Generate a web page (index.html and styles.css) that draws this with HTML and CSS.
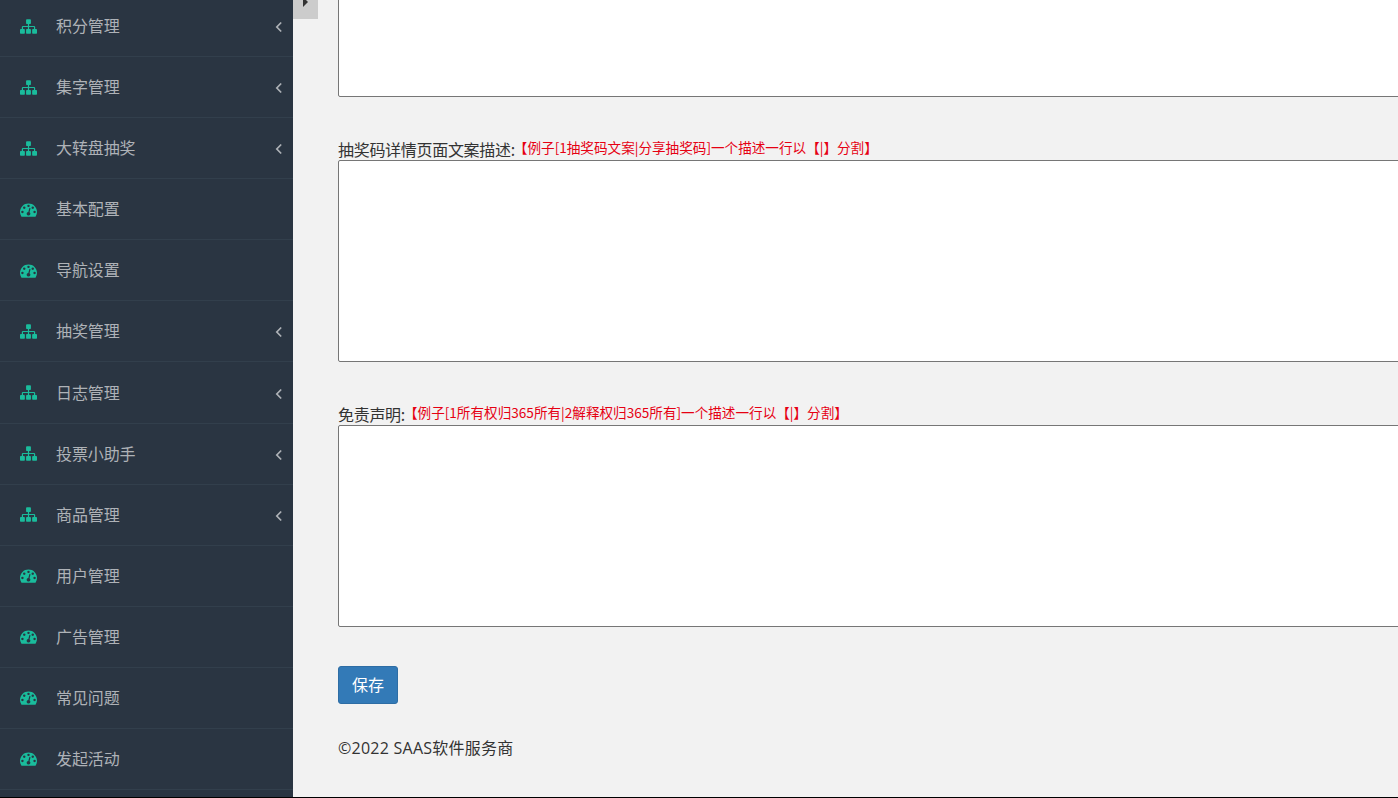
FILE: index.html
```html
<!DOCTYPE html>
<html lang="zh-CN">
<head>
<meta charset="utf-8">
<title>SAAS</title>
<link rel="stylesheet" href="styles.css">
</head>
<body>
<svg class="defs" aria-hidden="true">
<symbol id="i-sitemap" viewBox="0 0 1792 1792"><path d="M1792 1248v320q0 40-28 68t-68 28h-320q-40 0-68-28t-28-68v-320q0-40 28-68t68-28h96v-192h-512v192h96q40 0 68 28t28 68v320q0 40-28 68t-68 28h-320q-40 0-68-28t-28-68v-320q0-40 28-68t68-28h96v-192h-512v192h96q40 0 68 28t28 68v320q0 40-28 68t-68 28h-320q-40 0-68-28t-28-68v-320q0-40 28-68t68-28h96v-192q0-52 38-90t90-38h512v-192h-96q-40 0-68-28t-28-68v-320q0-40 28-68t68-28h320q40 0 68 28t28 68v320q0 40-28 68t-68 28h-96v192h512q52 0 90 38t38 90v192h96q40 0 68 28t28 68z"/></symbol>
<symbol id="i-dash" viewBox="0 0 1792 1792"><path fill-rule="evenodd" d="M384 1152q0-53-37.5-90.5t-90.5-37.5-90.5 37.5-37.5 90.5 37.5 90.5 90.5 37.5 90.5-37.5 37.5-90.5zm192-448q0-53-37.5-90.5t-90.5-37.5-90.5 37.5-37.5 90.5 37.5 90.5 90.5 37.5 90.5-37.5 37.5-90.5zm428 481l101-382q6-26-7.5-48.5t-38.5-29.5-48 6.5-30 39.5l-101 382q-60 5-107 43.5t-63 98.5q-20 77 20 146t117 89 146-20 89-117q16-60-6-117t-72-91zm660-33q0-53-37.5-90.5t-90.5-37.5-90.5 37.5-37.5 90.5 37.5 90.5 90.5 37.5 90.5-37.5 37.5-90.5zm-640-640q0-53-37.5-90.5t-90.5-37.5-90.5 37.5-37.5 90.5 37.5 90.5 90.5 37.5 90.5-37.5 37.5-90.5zm448 192q0-53-37.5-90.5t-90.5-37.5-90.5 37.5-37.5 90.5 37.5 90.5 90.5 37.5 90.5-37.5 37.5-90.5zm320 448q0 261-141 483-19 29-54 29h-1402q-35 0-54-29-141-221-141-483 0-182 71-348t191-286 286-191 348-71 348 71 286 191 191 286 71 348z"/></symbol>
<symbol id="i-left" viewBox="0 0 8 12"><path d="M6.2 1.5 1.8 6l4.4 4.5" fill="none" stroke="currentColor" stroke-width="1.7"/></symbol>
</svg>
<div class="app">
  <aside class="sidebar">
    <ul class="menu">
      <li class="item"><svg class="icon"><use href="#i-sitemap"/></svg><span class="name">积分管理</span><svg class="arrow"><use href="#i-left"/></svg></li>
      <li class="item"><svg class="icon"><use href="#i-sitemap"/></svg><span class="name">集字管理</span><svg class="arrow"><use href="#i-left"/></svg></li>
      <li class="item"><svg class="icon"><use href="#i-sitemap"/></svg><span class="name">大转盘抽奖</span><svg class="arrow"><use href="#i-left"/></svg></li>
      <li class="item"><svg class="icon"><use href="#i-dash"/></svg><span class="name">基本配置</span></li>
      <li class="item"><svg class="icon"><use href="#i-dash"/></svg><span class="name">导航设置</span></li>
      <li class="item"><svg class="icon"><use href="#i-sitemap"/></svg><span class="name">抽奖管理</span><svg class="arrow"><use href="#i-left"/></svg></li>
      <li class="item"><svg class="icon"><use href="#i-sitemap"/></svg><span class="name">日志管理</span><svg class="arrow"><use href="#i-left"/></svg></li>
      <li class="item"><svg class="icon"><use href="#i-sitemap"/></svg><span class="name">投票小助手</span><svg class="arrow"><use href="#i-left"/></svg></li>
      <li class="item"><svg class="icon"><use href="#i-sitemap"/></svg><span class="name">商品管理</span><svg class="arrow"><use href="#i-left"/></svg></li>
      <li class="item"><svg class="icon"><use href="#i-dash"/></svg><span class="name">用户管理</span></li>
      <li class="item"><svg class="icon"><use href="#i-dash"/></svg><span class="name">广告管理</span></li>
      <li class="item"><svg class="icon"><use href="#i-dash"/></svg><span class="name">常见问题</span></li>
      <li class="item"><svg class="icon"><use href="#i-dash"/></svg><span class="name">发起活动</span></li>
    </ul>
  </aside>
  <main class="main">
    <div class="toggle"><span class="caret"></span></div>
    <form class="form">
      <div class="field field-first"><textarea class="area"></textarea></div>
      <div class="field">
        <label class="label">抽奖码详情页面文案描述:<span class="hint">【例子[1抽奖码文案|分享抽奖码]一个描述一行以【|】分割】</span></label>
        <textarea class="area"></textarea>
      </div>
      <div class="field">
        <label class="label">免责声明:<span class="hint">【例子[1所有权归365所有|2解释权归365所有]一个描述一行以【|】分割】</span></label>
        <textarea class="area"></textarea>
      </div>
      <button class="save" type="button">保存</button>
    </form>
    <footer class="footer">©2022 SAAS软件服务商</footer>
  </main>
</div>
</body>
</html>
```
FILE: styles.css
```css
* { box-sizing: border-box; }
html, body { margin: 0; padding: 0; height: 100%; overflow: hidden; }
body {
  background: #f2f2f2;
  color: #333;
  font-family: "Noto Sans CJK SC", "Open Sans", sans-serif;
  font-size: 16px;
}
.defs { display: none; }
.app {
  display: flex;
  height: 798px;
  border-bottom: 1px solid #000;
  overflow: hidden;
}
.sidebar {
  flex: 0 0 293px;
  background: #2a3542;
  overflow: hidden;
}
.menu {
  list-style: none;
  margin: -4px 0 0;
  padding: 0;
}
.item {
  display: flex;
  align-items: center;
  height: 61.08px;
  padding: 0 10px 0 20px;
  border-bottom: 1px solid #323f4c;
  color: #aeb2b7;
  line-height: 22px;
}
.icon {
  flex: 0 0 17px;
  width: 17px;
  height: 17px;
  fill: #1abc9c;
}
.name {
  flex: 1;
  margin-left: 19px;
  padding-bottom: 2px;
  letter-spacing: -0.1px;
  white-space: nowrap;
}
.arrow {
  flex: 0 0 8px;
  width: 8px;
  height: 12px;
  margin-top: 2px;
  color: #aeb2b7;
}
.main {
  position: relative;
  flex: 1;
  min-width: 0;
  padding-left: 45px;
  overflow: hidden;
}
.toggle {
  position: absolute;
  left: 0;
  top: 0;
  width: 25px;
  height: 19px;
  background: #ccc;
}
.caret {
  position: absolute;
  left: 10px;
  top: -3px;
  border-left: 5px solid #333;
  border-top: 5px solid transparent;
  border-bottom: 5px solid transparent;
}
.form {
  display: flex;
  flex-direction: column;
  align-items: flex-start;
  width: 1300px;
  margin-top: -105px;
}
.field {
  width: 100%;
  margin-bottom: 41px;
}
.field:nth-child(3) { margin-bottom: 39px; }
.label {
  display: block;
  height: 22px;
  line-height: 22px;
  white-space: nowrap;
  color: #333;
  font-size: 16px;
  letter-spacing: -0.3px;
}
.hint {
  margin-left: -1px;
  color: #e60012;
  font-size: 13.6px;
  line-height: 0;
  letter-spacing: 0;
  vertical-align: 3px;
}
.area {
  display: block;
  width: 100%;
  height: 202px;
  background: #fff;
  border: 1px solid #767676;
  border-radius: 2px;
  padding: 2px;
  resize: none;
}
.save {
  width: 60px;
  height: 38px;
  padding: 0 0 3px;
  background: #337ab7;
  border: 1px solid #2e6da4;
  border-radius: 3px;
  color: #fff;
  font-family: inherit;
  font-size: 16px;
}
.footer {
  margin-top: 33px;
  line-height: 22px;
  letter-spacing: 0.25px;
  color: #333;
  font-family: "Open Sans", "Noto Sans CJK SC", sans-serif;
}
```
